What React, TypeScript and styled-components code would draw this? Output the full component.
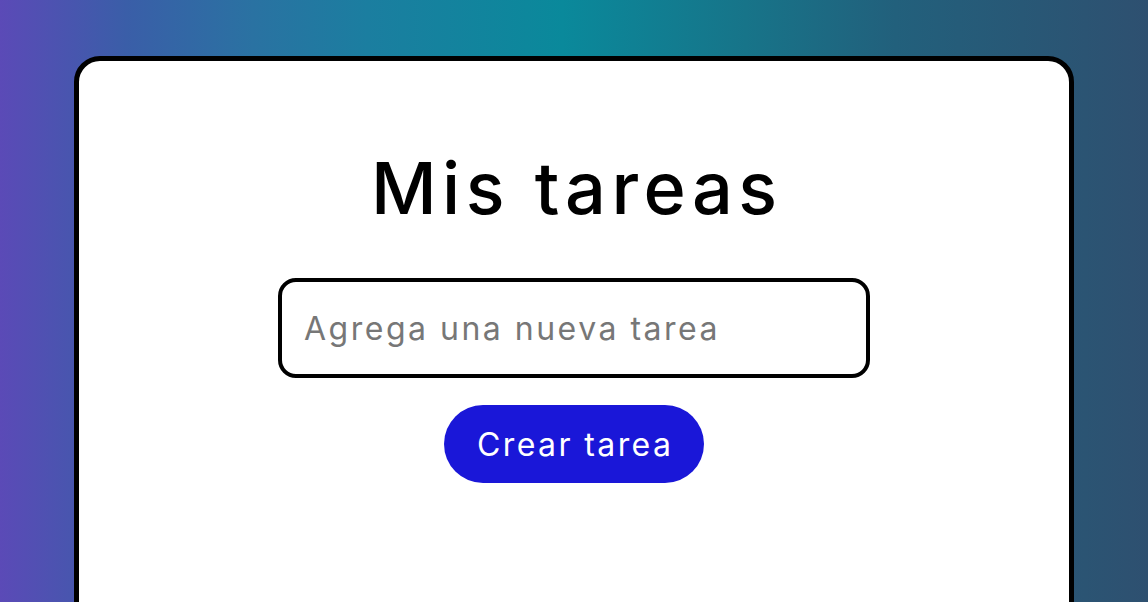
import * as React from 'react';
import styled, { createGlobalStyle } from 'styled-components';

const GlobalStyle = createGlobalStyle`
  html, body {
    margin: 0;
    padding: 0;
    height: 100%;
    overflow: hidden;
  }
  body {
    font-family: Inter, "Noto Sans", sans-serif;
    background: linear-gradient(
      to right,
      #5b4ab7 0%,
      #3a5ea8 11%,
      #2a72a2 22%,
      #1b7ea0 32%,
      #0a899b 49%,
      #177489 65%,
      #22607c 78%,
      #2e5070 100%
    );
  }
`;

const Page = styled.main`
  height: 100vh;
  padding-top: 56px;
  box-sizing: border-box;
  display: flex;
  justify-content: center;
`;

const Card = styled.section`
  width: 1000px;
  min-height: 620px;
  box-sizing: border-box;
  background: #fff;
  border: 5px solid #000;
  border-radius: 26px;
  display: flex;
  flex-direction: column;
  align-items: center;
  padding-top: 83px;
`;

const Title = styled.h1`
  margin: 0 0 46px;
  font-size: 72px;
  font-weight: 500;
  line-height: 88px;
  color: #000;
  letter-spacing: 5.5px;
  text-indent: 5.5px;
`;

const Form = styled.form`
  display: flex;
  flex-direction: column;
  align-items: center;
  gap: 27px;
`;

const TaskInput = styled.input`
  width: 592px;
  height: 100px;
  box-sizing: border-box;
  border: 4px solid #000;
  border-radius: 18px;
  padding: 0 22px;
  font-family: inherit;
  font-size: 32px;
  letter-spacing: 2.5px;
  color: #222;
  outline: none;

  &::placeholder {
    color: #777;
  }
`;

const SubmitButton = styled.button`
  width: 260px;
  height: 78px;
  border: none;
  border-radius: 39px;
  background: #1a17d8;
  color: #fff;
  font-family: inherit;
  font-size: 32px;
  letter-spacing: 2.4px;
  text-indent: 2.4px;
  cursor: pointer;
`;

export default function App() {
  const [value, setValue] = React.useState('');

  return (
    <>
      <GlobalStyle />
      <Page>
        <Card>
          <Title>Mis tareas</Title>
          <Form onSubmit={(e) => e.preventDefault()}>
            <TaskInput
              value={value}
              onChange={(e) => setValue(e.target.value)}
              placeholder="Agrega una nueva tarea"
            />
            <SubmitButton type="submit">Crear tarea</SubmitButton>
          </Form>
        </Card>
      </Page>
    </>
  );
}
